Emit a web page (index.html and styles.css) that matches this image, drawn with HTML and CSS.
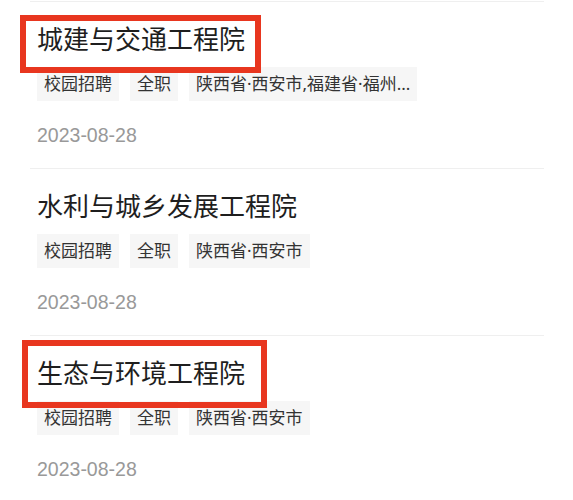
FILE: index.html
```html
<html>
<head>
<meta charset="utf-8">
<link rel="stylesheet" href="styles.css">
<title>招聘信息</title>
</head>
<body>
	<div class="list">
		<div class="item">
			<span class="mark mark-first"></span>
			<div class="title">城建与交通工程院</div>
			<div class="tags">
				<span class="tag">校园招聘</span>
				<span class="tag">全职</span>
				<span class="tag">陕西省·西安市,福建省·福州...</span>
			</div>
			<div class="date">2023-08-28</div>
		</div>
		<div class="item">
			<div class="title">水利与城乡发展工程院</div>
			<div class="tags">
				<span class="tag">校园招聘</span>
				<span class="tag">全职</span>
				<span class="tag">陕西省·西安市</span>
			</div>
			<div class="date">2023-08-28</div>
		</div>
		<div class="item">
			<span class="mark mark-third"></span>
			<div class="title">生态与环境工程院</div>
			<div class="tags">
				<span class="tag">校园招聘</span>
				<span class="tag">全职</span>
				<span class="tag">陕西省·西安市</span>
			</div>
			<div class="date">2023-08-28</div>
		</div>
	</div>
</body>
</html>
```

FILE: styles.css
```css
* {
  margin: 0;
  padding: 0;
  box-sizing: border-box;
}

body {
  font-family: "Noto Sans CJK SC", "Noto Sans", sans-serif;
  background: #fff;
  color: #222;
  overflow: hidden;
}

.list {
  margin: 1px 29px 0 30px;
}

.item {
  position: relative;
  border-top: 1px solid #efefef;
  padding: 18px 0 21px 7px;
}

.title {
  font-size: 26px;
  line-height: 36px;
  color: #1e1e1e;
}

.tags {
  display: flex;
  gap: 11px;
  margin-top: 11px;
}

.tag {
  background: #f6f6f6;
  color: #333;
  font-family: "Noto Sans", "Noto Sans CJK SC", sans-serif;
  font-size: 17px;
  line-height: 34px;
  height: 34px;
  padding: 0 7px;
}

.date {
  font-family: "Liberation Sans", Arial, sans-serif;
  font-size: 19.5px;
  line-height: 24px;
  color: #999;
  margin-top: 22px;
}

/* red annotation boxes drawn over the screenshot */
.mark {
  position: absolute;
  border: 6px solid #e8361f;
}

.mark-first {
  left: -10px;
  top: 13px;
  width: 241px;
  height: 58px;
}

.mark-third {
  left: -8px;
  top: 4px;
  width: 245px;
  height: 68px;
}
```
